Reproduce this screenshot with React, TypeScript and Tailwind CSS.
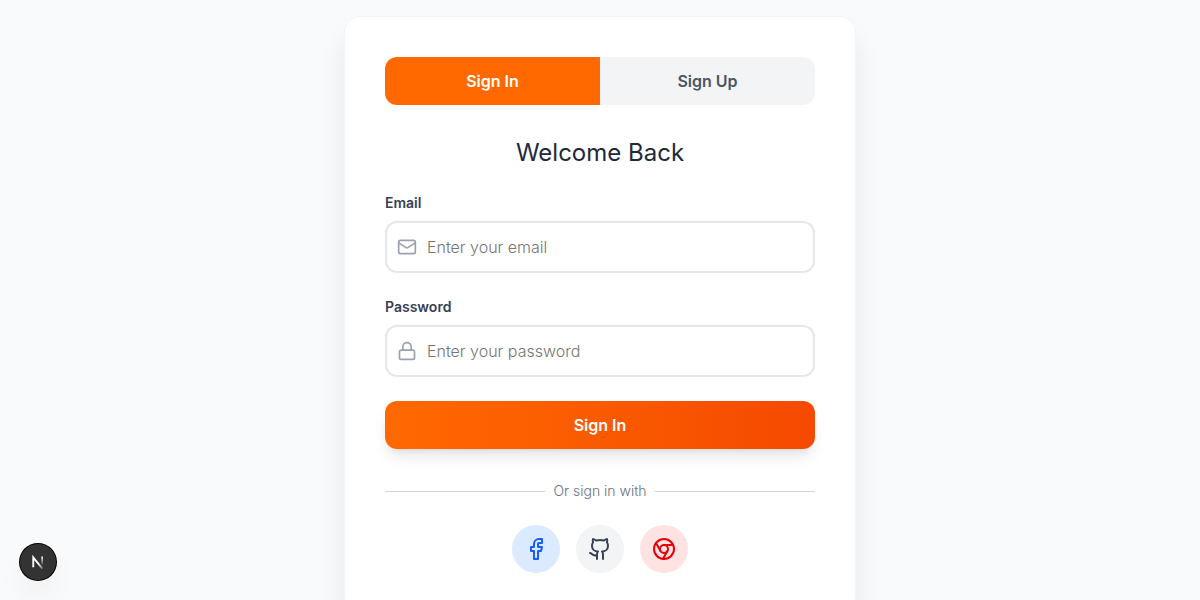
import { useState } from "react";
import { Facebook, Github, Lock, Mail } from "lucide-react";

function ChromeIcon() {
  return (
    <svg width="24" height="24" viewBox="0 0 24 24" fill="none" stroke="currentColor" strokeWidth="2" strokeLinecap="round" strokeLinejoin="round" aria-hidden="true">
      <circle cx="12" cy="12" r="10" />
      <circle cx="12" cy="12" r="4" />
      <path d="M21.17 8H12M3.95 6.06 8.54 14M10.88 21.94 15.46 14" />
    </svg>
  );
}

function NextMark() {
  return (
    <svg width="38" height="38" viewBox="0 0 38 38" fill="none" aria-hidden="true">
      <defs>
        <linearGradient id="stem" x1="0" y1="13" x2="0" y2="23" gradientUnits="userSpaceOnUse">
          <stop stopColor="#fff" />
          <stop offset="1" stopColor="#fff" stopOpacity="0" />
        </linearGradient>
        <linearGradient id="slash" x1="20" y1="20" x2="25" y2="26" gradientUnits="userSpaceOnUse">
          <stop stopColor="#fff" />
          <stop offset="1" stopColor="#fff" stopOpacity="0.2" />
        </linearGradient>
      </defs>
      <path d="M14 24.5V14.2L23.6 26" stroke="url(#slash)" strokeWidth="2" />
      <path d="M23.4 13.2V23" stroke="url(#stem)" strokeWidth="1.8" />
    </svg>
  );
}

const fields = [
  { id: "email", label: "Email", type: "email", placeholder: "Enter your email", Icon: Mail },
  { id: "password", label: "Password", type: "password", placeholder: "Enter your password", Icon: Lock },
];

export default function App() {
  const [mode, setMode] = useState("in");
  const tab = "flex-1 py-3 text-base font-semibold ";
  return (
    <div className="flex min-h-screen items-center justify-center bg-gray-50 p-4 font-['Inter',sans-serif]">
      <main className="w-full max-w-lg rounded-2xl border border-gray-100 bg-white p-10 shadow-[0_20px_30px_-4px_rgba(0,0,0,0.1)]">
        <div className="mb-8 flex overflow-hidden rounded-xl">
          <button type="button" onClick={() => setMode("in")} className={tab + (mode === "in" ? "bg-[#ff6900] text-white" : "bg-gray-100 text-gray-600")}>
            Sign In
          </button>
          <button type="button" onClick={() => setMode("up")} className={tab + (mode === "up" ? "bg-[#ff6900] text-white" : "bg-gray-100 text-gray-600")}>
            Sign Up
          </button>
        </div>
        <h1 className="mb-6 text-center text-2xl text-gray-800">Welcome Back</h1>
        <form className="space-y-6" onSubmit={(e) => e.preventDefault()}>
          {fields.map(({ id, label, type, placeholder, Icon }) => (
            <div key={id}>
              <label htmlFor={id} className="mb-2 block text-sm font-semibold text-gray-700">
                {label}
              </label>
              <div className="flex items-center gap-2.5 rounded-xl border-2 border-gray-200 px-2.5">
                <Icon className="size-5 shrink-0 text-gray-400" aria-hidden="true" />
                <input id={id} type={type} placeholder={placeholder} className="w-full min-w-0 py-3 text-base font-light outline-none placeholder:text-[#757575]" />
              </div>
            </div>
          ))}
          <button type="submit" className="w-full rounded-xl bg-linear-to-r from-[#ff6900] to-[#f54900] py-3 text-base font-semibold text-white shadow-lg">
            Sign In
          </button>
        </form>
        <div className="mt-8 flex items-center gap-2">
          <div className="h-px flex-1 bg-gray-300" />
          <span className="text-sm font-light text-gray-500">Or sign in with</span>
          <div className="h-px flex-1 bg-gray-300" />
        </div>
        <div className="mt-6 flex justify-center gap-4">
          <button type="button" aria-label="Facebook" className="flex size-12 items-center justify-center rounded-full bg-blue-100 text-blue-600">
            <Facebook size={24} />
          </button>
          <button type="button" aria-label="GitHub" className="flex size-12 items-center justify-center rounded-full bg-gray-100 text-gray-700">
            <Github size={24} />
          </button>
          <button type="button" aria-label="Google" className="flex size-12 items-center justify-center rounded-full bg-red-100 text-red-600">
            <ChromeIcon />
          </button>
        </div>
      </main>
      <button type="button" aria-label="Developer tools" className="fixed bottom-5 left-5 flex size-9 items-center justify-center rounded-full bg-[#333] shadow-[0_16px_32px_-8px_rgba(0,0,0,0.14)] ring-1 ring-black">
        <NextMark />
      </button>
    </div>
  );
}
